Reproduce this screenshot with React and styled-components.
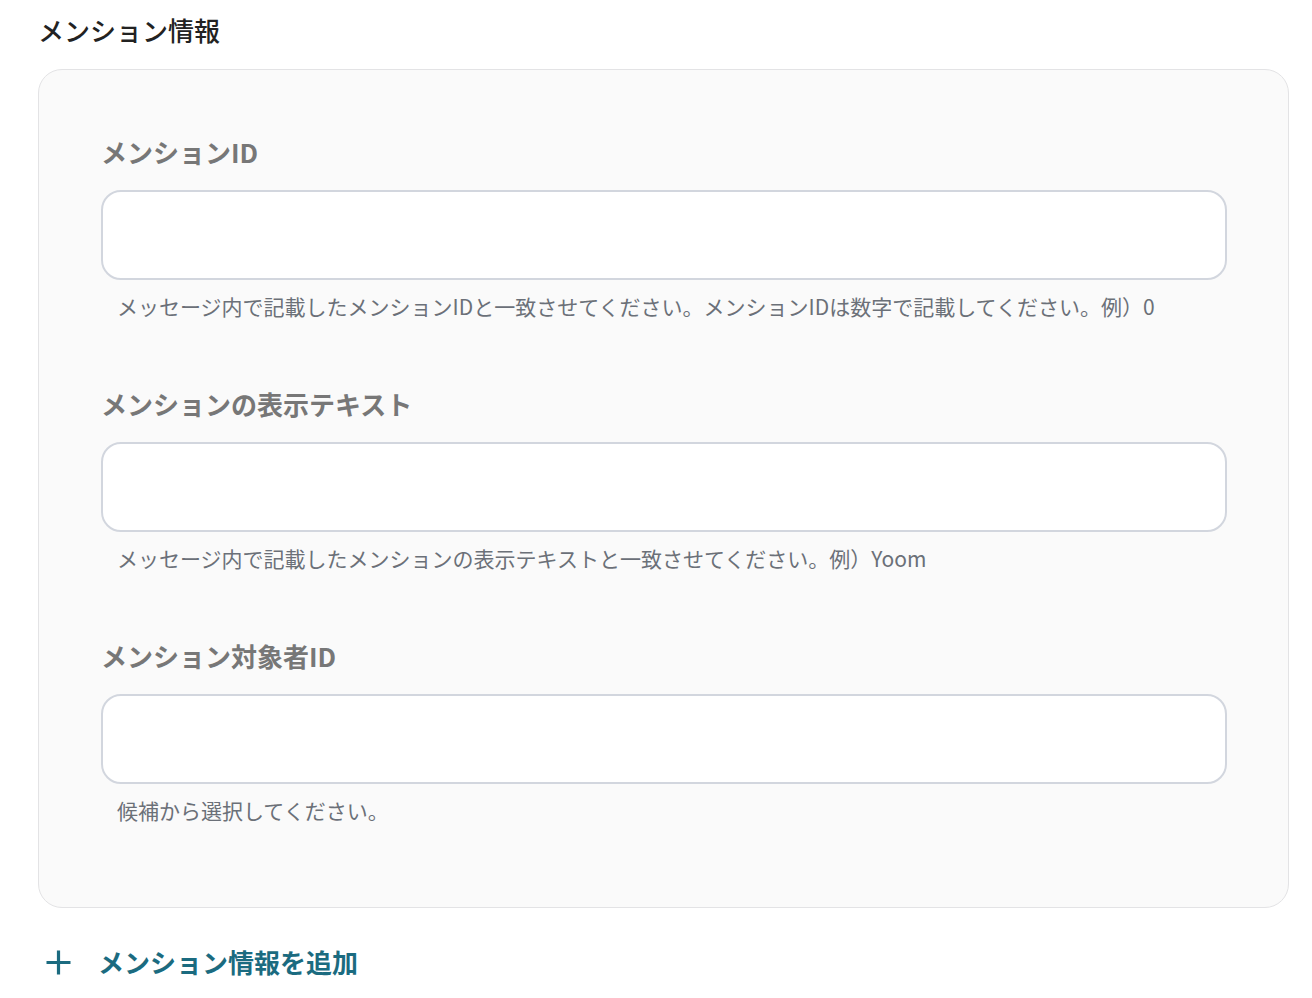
import React from "react";
import styled, { createGlobalStyle } from "styled-components";

const Global = createGlobalStyle`
  html, body { margin: 0; padding: 0; background: #ffffff; }
  body { font-family: "Noto Sans CJK JP", "Noto Sans", sans-serif; }
  * { box-sizing: border-box; }
`;

const Page = styled.div`
  padding: 12px 23px 0 38px;
`;

const Title = styled.h2`
  margin: 0;
  font-size: 26px;
  line-height: 36px;
  font-weight: 500;
  color: #222222;
`;

const Panel = styled.div`
  margin-top: 21px;
  background: #fafafa;
  border: 1.5px solid #e3e3e5;
  border-radius: 24px;
  padding: 64px 61px 83px 62px;
  display: flex;
  flex-direction: column;
  gap: 66px;
`;

const Field = styled.div`
  display: flex;
  flex-direction: column;
`;

const Label = styled.label`
  font-size: 26px;
  line-height: 36px;
  font-weight: 700;
  color: #777777;
`;

const Input = styled.input`
  margin-top: 20px;
  height: 90px;
  width: 100%;
  background: #ffffff;
  border: 2px solid #d2d6de;
  border-radius: 20px;
  padding: 0 24px;
  font-size: 22px;
  font-family: inherit;
  outline: none;
`;

const Help = styled.p`
  margin: 12px 0 0;
  padding-left: 16px;
  font-size: 21px;
  line-height: 28px;
  color: #6b7078;
`;

const AddButton = styled.button`
  margin-top: 36px;
  display: flex;
  align-items: center;
  gap: 26px;
  padding: 0 0 0 7px;
  border: none;
  background: none;
  font-family: inherit;
  font-size: 26px;
  line-height: 36px;
  font-weight: 700;
  color: #1b6b80;
  cursor: pointer;
`;

const PlusIcon = () => (
  <svg width="27" height="27" viewBox="0 0 27 27" fill="none">
    <path d="M13.5 1.5v24M1.5 13.5h24" stroke="#1b6b80" strokeWidth="3.2" strokeLinecap="butt" />
  </svg>
);

const fields = [
  {
    label: "メンションID",
    help: "メッセージ内で記載したメンションIDと一致させてください。メンションIDは数字で記載してください。例）0",
  },
  {
    label: "メンションの表示テキスト",
    help: "メッセージ内で記載したメンションの表示テキストと一致させてください。例）Yoom",
  },
  {
    label: "メンション対象者ID",
    help: "候補から選択してください。",
  },
];

export default function App() {
  return (
    <>
      <Global />
      <Page>
        <Title>メンション情報</Title>
        <Panel>
          {fields.map((f) => (
            <Field key={f.label}>
              <Label>{f.label}</Label>
              <Input type="text" />
              <Help>{f.help}</Help>
            </Field>
          ))}
        </Panel>
        <AddButton type="button">
          <PlusIcon />
          メンション情報を追加
        </AddButton>
      </Page>
    </>
  );
}
